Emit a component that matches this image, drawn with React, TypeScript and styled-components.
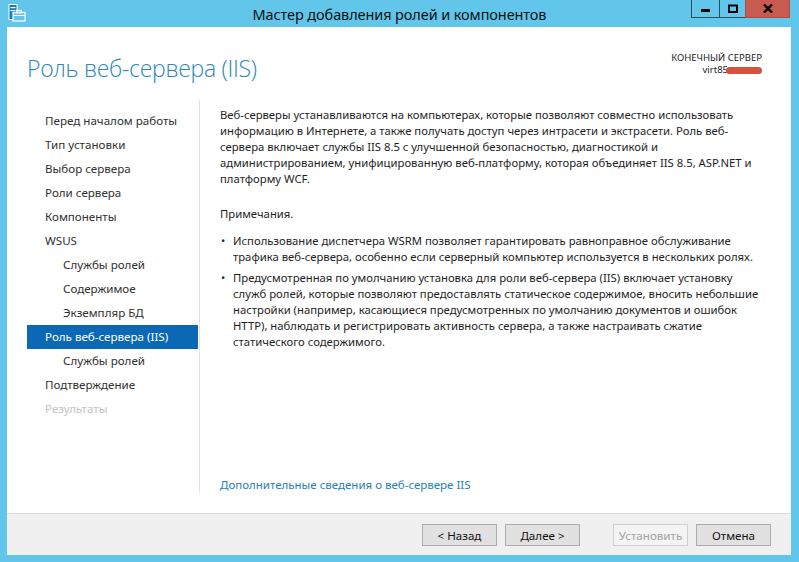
import React from 'react';
import styled, { createGlobalStyle } from 'styled-components';

const GlobalStyle = createGlobalStyle`
  html, body {
    margin: 0;
    padding: 0;
    background: #62c6ea;
  }
  * {
    box-sizing: border-box;
  }
`;

const Window = styled.div`
  width: 799px;
  height: 562px;
  display: flex;
  flex-direction: column;
  background: #62c6ea;
  font-family: 'Noto Sans', 'Open Sans', sans-serif;
  overflow: hidden;
`;

const TitleBar = styled.div`
  height: 27px;
  flex: none;
  display: grid;
  grid-template-columns: 1fr auto 1fr;
  align-items: start;
`;

const AppIcon = styled.div`
  padding: 4px 0 0 8px;
  height: 27px;
  display: flex;
`;

const Caption = styled.div`
  padding-top: 4px;
  font-size: 14.5px;
  color: #101010;
  white-space: nowrap;
  letter-spacing: -0.1px;
`;

const CaptionButtons = styled.div`
  justify-self: end;
  display: flex;
  margin-right: 9px;
`;

const CaptionButton = styled.div<{ $w: number; $close?: boolean }>`
  width: ${(p) => p.$w}px;
  height: 18px;
  display: flex;
  align-items: center;
  justify-content: center;
  background: ${(p) => (p.$close ? '#c75b4f' : 'transparent')};
  border: 1px solid #2d4d5c;
  border-top: none;
  margin-left: -1px;
  ${(p) => (p.$close ? 'border-color: #b44a3e;' : '')}
`;

const Client = styled.div`
  flex: 1;
  margin: 0 8px 7px 7px;
  background: #ffffff;
  display: flex;
  flex-direction: column;
`;

const Header = styled.div`
  height: 73px;
  flex: none;
  display: flex;
  justify-content: space-between;
  padding: 0 29px 0 20px;
`;

const PageTitle = styled.div`
  padding-top: 25px;
  font-family: 'Open Sans', 'Noto Sans', sans-serif;
  font-weight: 300;
  font-size: 23px;
  color: #2a86bd;
  white-space: nowrap;
  letter-spacing: -0.3px;
`;

const ServerInfo = styled.div`
  padding-top: 25px;
  text-align: right;
  font-size: 9.5px;
  line-height: 12px;
  color: #222;
`;

const Blur = styled.span`
  display: inline-block;
  width: 36px;
  height: 7px;
  margin-left: -2px;
  border-radius: 4px;
  background: #d4533f;
  vertical-align: -1px;
`;

const Body = styled.div`
  flex: 1;
  display: flex;
  padding: 0 0 20px 20px;
`;

const Nav = styled.div`
  width: 173px;
  flex: none;
  padding-top: 9px;
  border-right: 1px solid #e3e3e3;
  display: flex;
  flex-direction: column;
`;

const NavItem = styled.div<{ $sub?: boolean; $active?: boolean; $disabled?: boolean }>`
  height: 24px;
  line-height: 24px;
  padding-left: ${(p) => (p.$sub ? 36 : 18)}px;
  margin-right: 1px;
  font-size: 11.6px;
  white-space: nowrap;
  color: ${(p) => (p.$active ? '#ffffff' : p.$disabled ? '#c4c4c4' : '#303030')};
  background: ${(p) => (p.$active ? '#0a68b4' : 'transparent')};
`;

const Content = styled.div`
  flex: 1;
  display: flex;
  flex-direction: column;
  padding: 7px 0 0 20px;
  font-size: 11.3px;
  line-height: 16px;
  color: #1e1e1e;
`;

const Paragraph = styled.div<{ $gap?: number }>`
  margin-bottom: ${(p) => p.$gap ?? 0}px;
`;

const Line = styled.div`
  white-space: nowrap;
`;

const Bullet = styled.div<{ $gap?: number }>`
  display: flex;
  margin-bottom: ${(p) => p.$gap ?? 0}px;
`;

const Dot = styled.div`
  width: 13px;
  flex: none;
  padding-left: 1px;
`;

const Spacer = styled.div`
  flex: 1;
`;

const Link = styled.div`
  font-size: 11.5px;
  color: #1f7fb8;
  white-space: nowrap;
`;

const Footer = styled.div`
  height: 42px;
  flex: none;
  border-top: 1px solid #dcdcdc;
  background: #f0f0f0;
  display: flex;
  justify-content: flex-end;
  align-items: flex-start;
  padding: 10px 20px 0 0;
  gap: 8px;
`;

const Button = styled.div<{ $disabled?: boolean; $space?: number }>`
  width: 75px;
  height: 22px;
  display: flex;
  align-items: center;
  justify-content: center;
  font-size: 11.6px;
  margin-left: ${(p) => p.$space ?? 0}px;
  color: ${(p) => (p.$disabled ? '#a3a3a3' : '#111')};
  background: ${(p) => (p.$disabled ? '#f4f4f4' : '#e1e1e1')};
  border: 1px solid ${(p) => (p.$disabled ? '#d0d0d0' : '#adadad')};
`;

const navItems = [
  { label: 'Перед началом работы' },
  { label: 'Тип установки' },
  { label: 'Выбор сервера' },
  { label: 'Роли сервера' },
  { label: 'Компоненты' },
  { label: 'WSUS' },
  { label: 'Службы ролей', sub: true },
  { label: 'Содержимое', sub: true },
  { label: 'Экземпляр БД', sub: true },
  { label: 'Роль веб-сервера (IIS)', active: true },
  { label: 'Службы ролей', sub: true },
  { label: 'Подтверждение' },
  { label: 'Результаты', disabled: true },
];

const intro = [
  'Веб-серверы устанавливаются на компьютерах, которые позволяют совместно использовать',
  'информацию в Интернете, а также получать доступ через интрасети и экстрасети. Роль веб-',
  'сервера включает службы IIS 8.5 с улучшенной безопасностью, диагностикой и',
  'администрированием, унифицированную веб-платформу, которая объединяет IIS 8.5, ASP.NET и',
  'платформу WCF.',
];

const notes = [
  [
    'Использование диспетчера WSRM позволяет гарантировать равноправное обслуживание',
    'трафика веб-сервера, особенно если серверный компьютер используется в нескольких ролях.',
  ],
  [
    'Предусмотренная по умолчанию установка для роли веб-сервера (IIS) включает установку',
    'служб ролей, которые позволяют предоставлять статическое содержимое, вносить небольшие',
    'настройки (например, касающиеся предусмотренных по умолчанию документов и ошибок',
    'HTTP), наблюдать и регистрировать активность сервера, а также настраивать сжатие',
    'статического содержимого.',
  ],
];

function WizardIcon() {
  return (
    <svg width="18" height="18" viewBox="0 0 18 18">
      <rect x="1" y="0.5" width="8" height="15" fill="#1a78c2" stroke="#fff" strokeWidth="1" />
      <rect x="2.5" y="3" width="5" height="1.2" fill="#fff" />
      <rect x="2.5" y="6" width="5" height="1.2" fill="#fff" />
      <rect x="5" y="8.5" width="12" height="8.5" fill="#62c6ea" stroke="#fff" strokeWidth="1.2" />
      <rect x="8.5" y="6.5" width="5" height="2.4" fill="none" stroke="#fff" strokeWidth="1.1" />
      <line x1="5" y1="11.5" x2="17" y2="11.5" stroke="#fff" strokeWidth="1" />
    </svg>
  );
}

export default function App() {
  return (
    <>
      <GlobalStyle />
      <Window>
        <TitleBar>
          <AppIcon>
            <WizardIcon />
          </AppIcon>
          <Caption>Мастер добавления ролей и компонентов</Caption>
          <CaptionButtons>
            <CaptionButton $w={29}>
              <svg width="9" height="9" viewBox="0 0 9 9">
                <rect x="0" y="5" width="9" height="3" fill="#000" />
              </svg>
            </CaptionButton>
            <CaptionButton $w={27}>
              <svg width="10" height="9" viewBox="0 0 10 9">
                <rect x="1" y="1.5" width="8" height="6.5" fill="none" stroke="#000" strokeWidth="2" />
              </svg>
            </CaptionButton>
            <CaptionButton $w={45} $close>
              <svg width="10" height="9" viewBox="0 0 10 9">
                <path d="M1 0.5 L9 8.5 M9 0.5 L1 8.5" stroke="#000" strokeWidth="2.4" />
              </svg>
            </CaptionButton>
          </CaptionButtons>
        </TitleBar>
        <Client>
          <Header>
            <PageTitle>Роль веб-сервера (IIS)</PageTitle>
            <ServerInfo>
              <div>КОНЕЧНЫЙ СЕРВЕР</div>
              <div>
                virt85
                <Blur />
              </div>
            </ServerInfo>
          </Header>
          <Body>
            <Nav>
              {navItems.map((item, i) => (
                <NavItem key={i} $sub={item.sub} $active={item.active} $disabled={item.disabled}>
                  {item.label}
                </NavItem>
              ))}
            </Nav>
            <Content>
              <Paragraph $gap={19}>
                {intro.map((l, i) => (
                  <Line key={i}>{l}</Line>
                ))}
              </Paragraph>
              <Paragraph $gap={11}>Примечания.</Paragraph>
              {notes.map((lines, i) => (
                <Bullet key={i} $gap={5}>
                  <Dot>•</Dot>
                  <div>
                    {lines.map((l, j) => (
                      <Line key={j}>{l}</Line>
                    ))}
                  </div>
                </Bullet>
              ))}
              <Spacer />
              <Link>Дополнительные сведения о веб-сервере IIS</Link>
            </Content>
          </Body>
          <Footer>
            <Button>&lt; Назад</Button>
            <Button>Далее &gt;</Button>
            <Button $disabled $space={25}>
              Установить
            </Button>
            <Button>Отмена</Button>
          </Footer>
        </Client>
      </Window>
    </>
  );
}
